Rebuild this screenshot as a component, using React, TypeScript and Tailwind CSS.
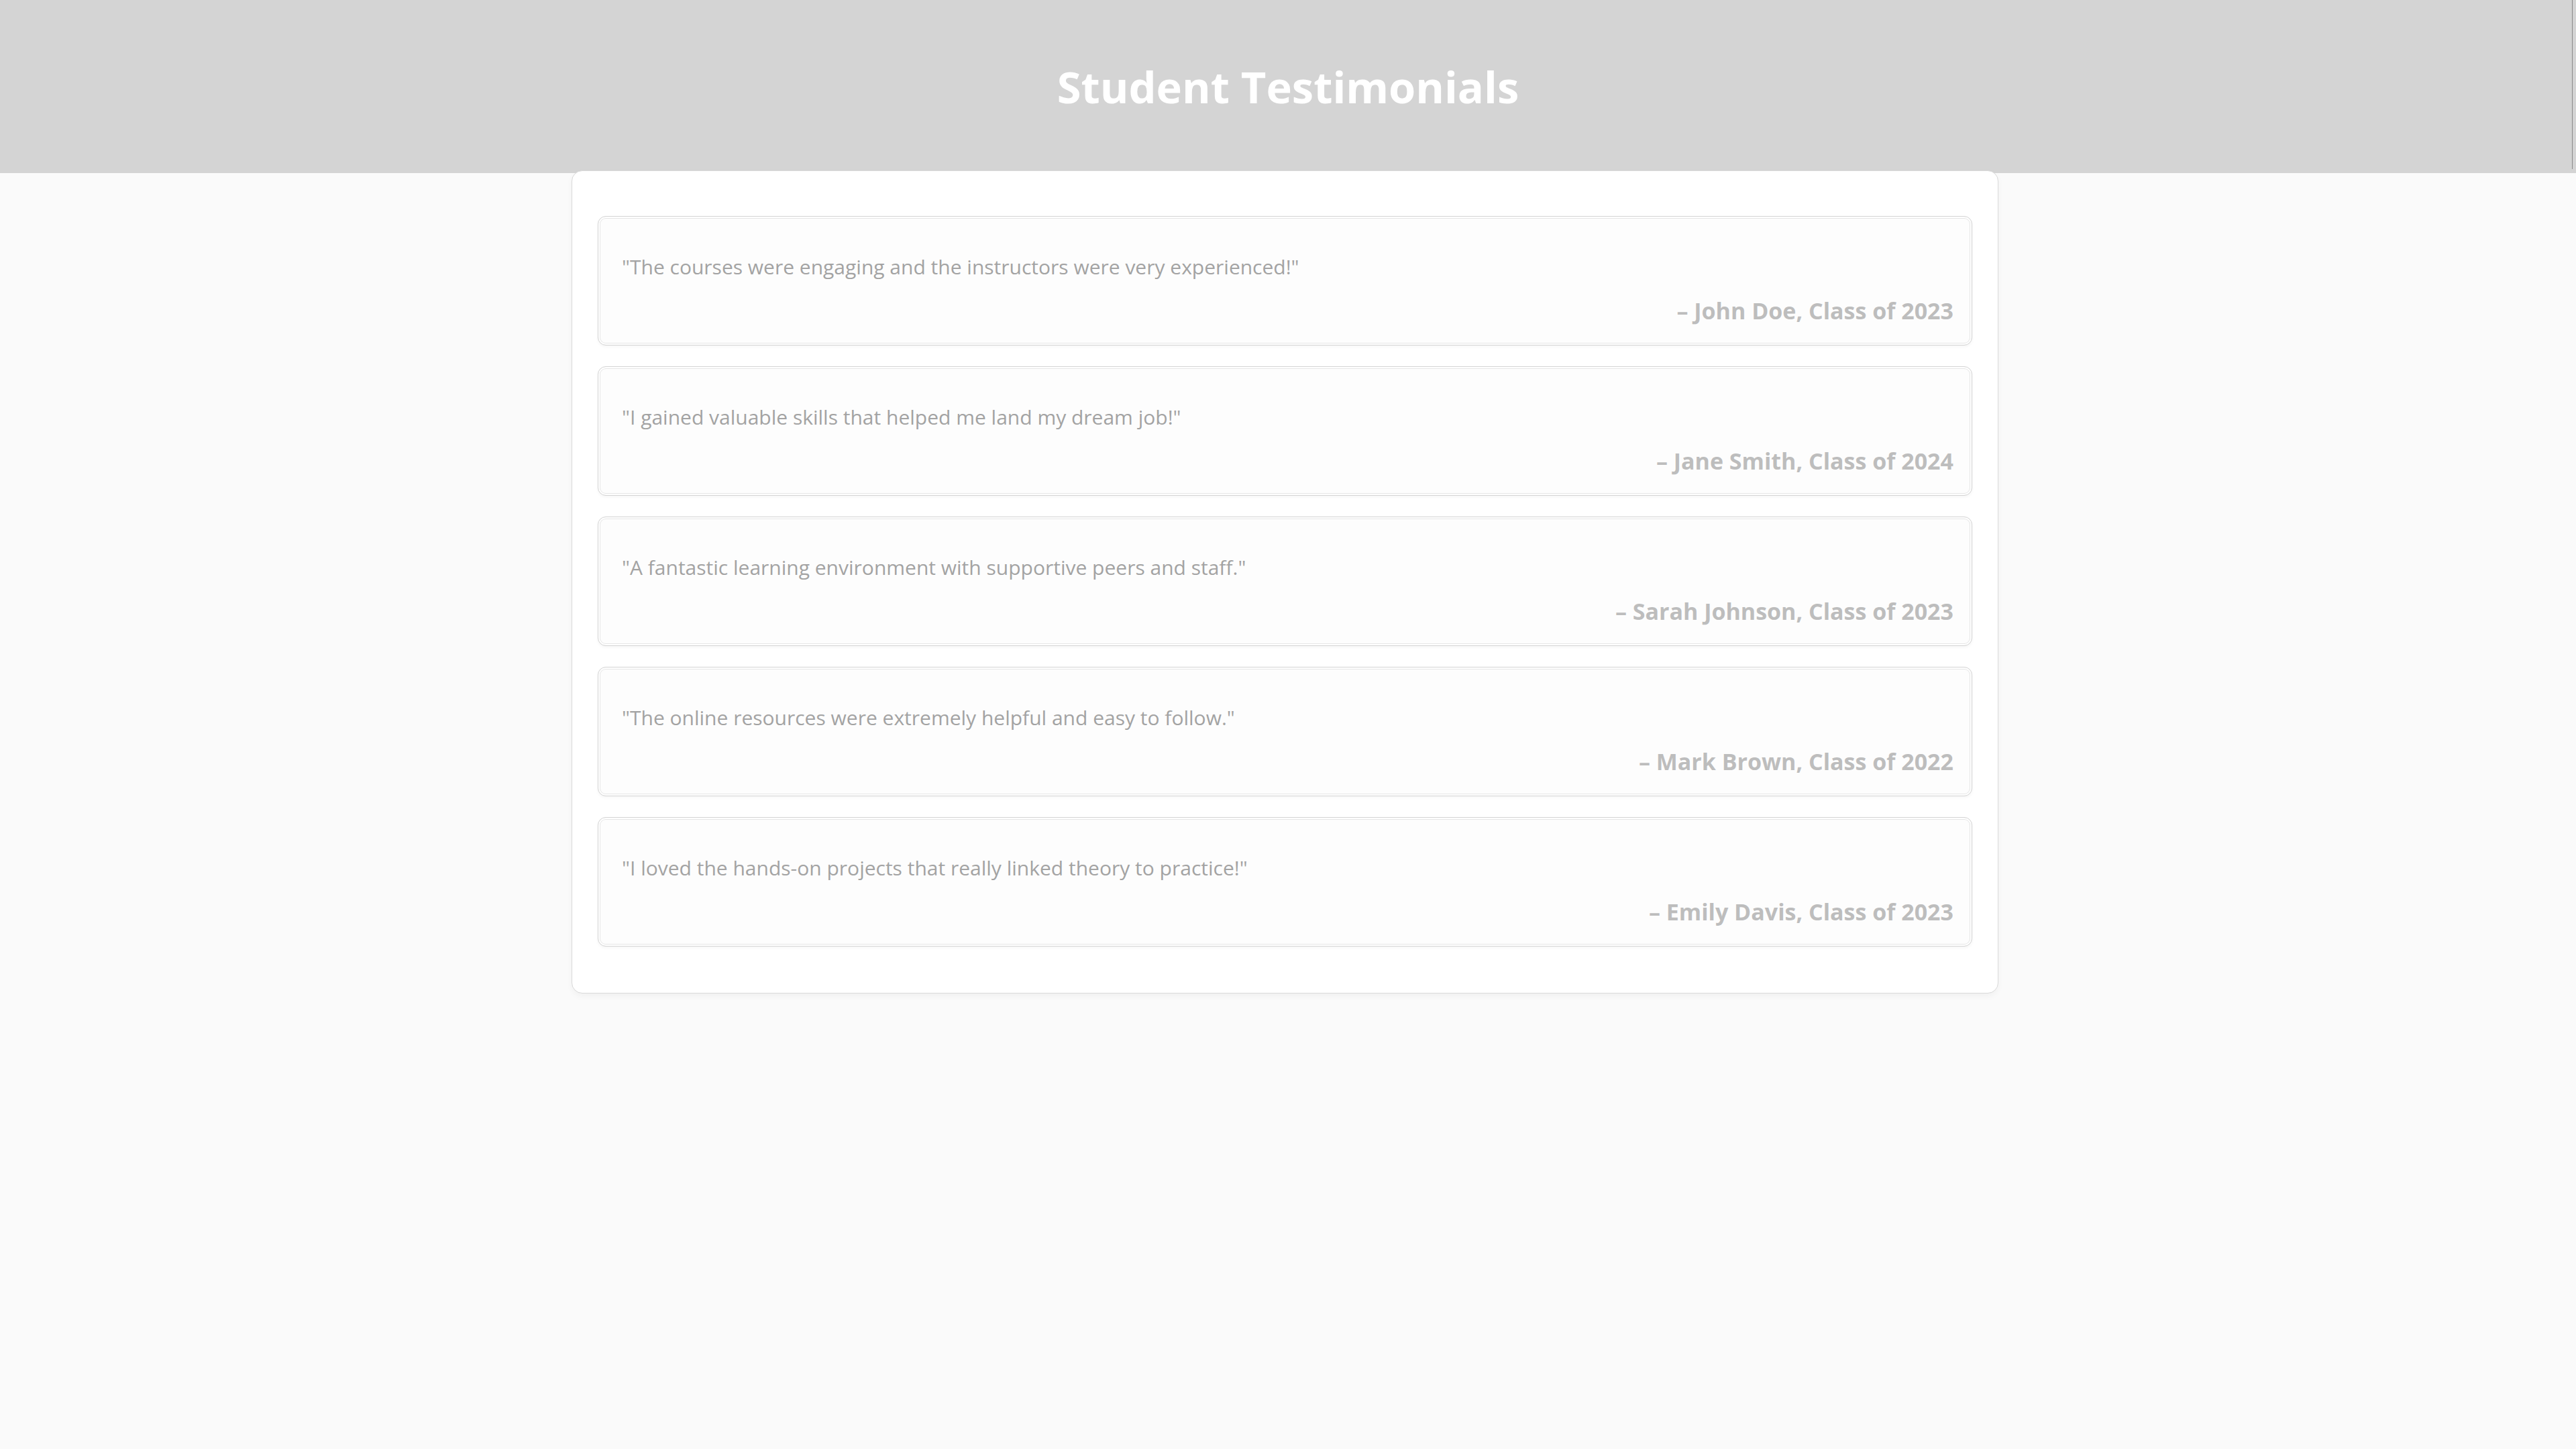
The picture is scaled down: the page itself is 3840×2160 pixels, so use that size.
import React from "react";

const testimonials = [
  { quote: "\"The courses were engaging and the instructors were very experienced!\"", author: "\u2013 John Doe, Class of 2023" },
  { quote: "\"I gained valuable skills that helped me land my dream job!\"", author: "\u2013 Jane Smith, Class of 2024" },
  { quote: "\"A fantastic learning environment with supportive peers and staff.\"", author: "\u2013 Sarah Johnson, Class of 2023" },
  { quote: "\"The online resources were extremely helpful and easy to follow.\"", author: "\u2013 Mark Brown, Class of 2022" },
  { quote: "\"I loved the hands-on projects that really linked theory to practice!\"", author: "\u2013 Emily Davis, Class of 2023" },
];

export default function App() {
  return (
    <div className="min-h-[2160px] bg-[#fafafa]" style={{ fontFamily: '"Open Sans", "Noto Sans", sans-serif' }}>
      <header className="relative h-[258px] bg-[#d4d4d4] flex items-center justify-center">
        <h1 className="text-[65px] font-bold text-white leading-none">Student Testimonials</h1>
        <div className="absolute right-[5px] top-0 h-[252px] w-[1px] bg-[#8a8a8a]" />
      </header>
      <main className="pr-[9px]">
        <section className="relative z-10 -mt-[4px] mx-auto w-[2127px] bg-white border border-[#d9d9d9] rounded-[16px] shadow-[0_4px_10px_rgba(0,0,0,0.04)] pt-[67px] px-[38px] pb-[69px] flex flex-col gap-[31px]">
          {testimonials.map((t) => (
            <div
              key={t.author}
              className="h-[193px] rounded-[12px] border border-[#d4d4d4] bg-[#fdfdfd] shadow-[inset_0_0_0_2px_#ffffff,inset_0_0_0_3px_#e6e6e6,0_2px_4px_rgba(0,0,0,0.04)] pt-[52px] pl-[35px] pr-[27px] flex flex-col"
            >
              <p className="text-[30px] leading-[45px] text-[#a3a3a3]">{t.quote}</p>
              <p className="mt-[17px] text-right text-[34px] leading-[52px] font-bold text-[#bdbdbd]">{t.author}</p>
            </div>
          ))}
        </section>
      </main>
    </div>
  );
}
